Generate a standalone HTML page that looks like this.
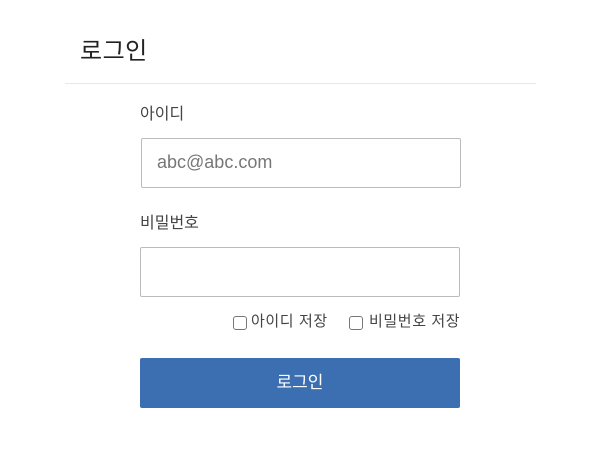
<!DOCTYPE html>
<html><head><meta charset="utf-8"><style>
body{margin:0;width:600px;height:450px;background:#fff;font-family:"Liberation Sans","Noto Sans CJK KR",sans-serif;color:#333;position:relative;overflow:hidden}
.abs{position:absolute;white-space:nowrap}
.box{position:absolute;border:1px solid #bbb;border-radius:2px;box-sizing:border-box;background:#fff}
.cb{position:absolute;width:14px;height:14px;border:1px solid #777;border-radius:3px;box-sizing:border-box;background:#fff}
</style></head><body>
<div class="abs" style="left:80px;top:36px;font-size:24px;line-height:32px;color:#222;letter-spacing:0.5px">로그인</div>
<div style="position:absolute;left:65px;top:83px;width:471px;height:1px;background:#e8e8e8"></div>
<div class="abs" style="left:140px;top:104px;font-size:16px;line-height:22px;color:#444">아이디</div>
<div class="box" style="left:141px;top:138px;width:320px;height:50px"></div>
<div class="abs" style="left:157px;top:150px;font-size:18px;line-height:24px;color:#777">abc@abc.com</div>
<div class="abs" style="left:140px;top:213px;font-size:16px;line-height:22px;color:#444">비밀번호</div>
<div class="box" style="left:140px;top:247px;width:320px;height:50px"></div>
<div class="cb" style="left:233px;top:316px"></div>
<div class="abs" style="left:251px;top:312px;font-size:15px;line-height:20px;color:#444;letter-spacing:0.6px">아이디 저장</div>
<div class="cb" style="left:349px;top:316px"></div>
<div class="abs" style="left:369px;top:312px;font-size:15px;line-height:20px;color:#444;letter-spacing:0.6px">비밀번호 저장</div>
<div style="position:absolute;left:140px;top:358px;width:320px;height:50px;background:#3b6fb2;border-radius:2px"></div>
<div class="abs" style="left:140px;top:371px;width:320px;text-align:center;font-size:17px;line-height:24px;color:#fff">로그인</div>
</body></html>
